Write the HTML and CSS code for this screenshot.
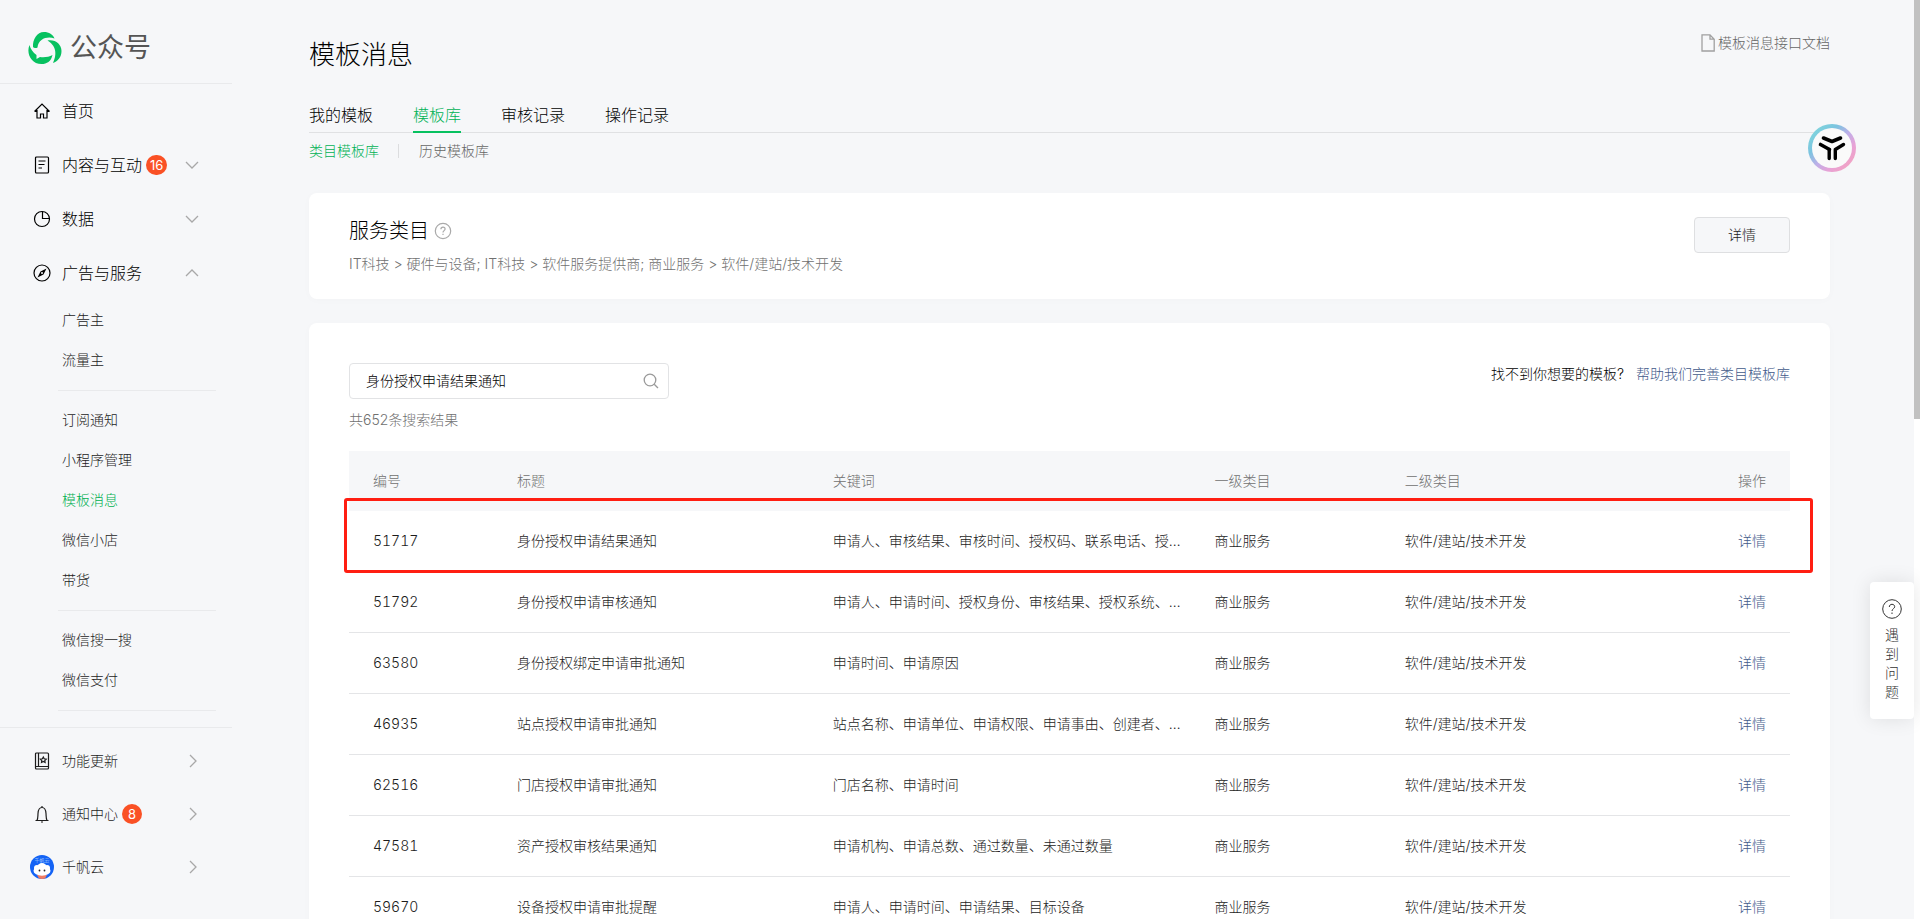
FILE: index.html
```html
<!DOCTYPE html>
<html lang="zh-CN">
<head>
<meta charset="utf-8">
<title>公众号 - 模板消息</title>
<link rel="stylesheet" href="styles.css">
</head>
<body>
<div class="page">
  <aside class="sidebar">
    <div class="brand">
      <svg class="brand-logo" viewBox="0 0 34 32" aria-hidden="true">
        <g fill="#07c160">
          <path d="M5 15C4.500 7.500 9 0 16 0c5 0 9 2.500 10.500 6.500C19.500 4 10.500 6.500 9.500 15.500 8 16.500 6 16 5 15z"/>
          <path d="M19.500 8.500C27 7 33.500 12 33.500 19c0 6-3.500 10-8.500 12 3-6.500 5-16-5.500-22.500z"/>
          <path d="M1.500 13C-2 21 3 32 13.500 32 19 32 23 29.500 24.500 23c-3.500 2-8 2.500-12.500 2L8.500 27v-4C5 20.500 2.500 17 1.500 13z"/>
        </g>
      </svg>
      <span class="brand-name">公众号</span>
    </div>
    <nav class="nav">
      <a class="nav-item" href="#">
        <svg class="icon" viewBox="0 0 18 18"><path d="M1.500 9.500L9 2l7.500 7.500M4 8v8h3.500v-4h3v4H14V8M1.500 9.500H4M14 9.500h2.500"/></svg>
        <span>首页</span>
      </a>
      <a class="nav-item" href="#">
        <svg class="icon" viewBox="0 0 18 18"><rect x="2.500" y="1" width="13" height="16" rx="1"/><path d="M5.500 5h7M5.500 8.500h6M5.500 12h3.500"/></svg>
        <span>内容与互动</span><span class="badge">16</span>
        <svg class="arrow" viewBox="0 0 14 14"><path d="M1 4l6 6 6-6"/></svg>
      </a>
      <a class="nav-item" href="#">
        <svg class="icon" viewBox="0 0 18 18"><circle cx="9" cy="9" r="7.500"/><path d="M9.500 1.500V8.500H16.500"/></svg>
        <span>数据</span>
        <svg class="arrow" viewBox="0 0 14 14"><path d="M1 4l6 6 6-6"/></svg>
      </a>
      <a class="nav-item" href="#">
        <svg class="icon" viewBox="0 0 18 18"><circle cx="9" cy="9" r="8"/><path d="M13.500 4.500L7.500 7.500 4.500 13.500 10.500 10.500z" fill="currentColor" stroke="none"/><circle cx="9" cy="9" r="1" fill="#f6f7f9" stroke="none"/></svg>
        <span>广告与服务</span>
        <svg class="arrow" viewBox="0 0 14 14"><path d="M1 10l6-6 6 6"/></svg>
      </a>
      <div class="subnav">
        <a href="#">广告主</a>
        <a href="#">流量主</a>
        <hr>
        <a href="#">订阅通知</a>
        <a href="#">小程序管理</a>
        <a class="current" href="#">模板消息</a>
        <a href="#">微信小店</a>
        <a href="#">带货</a>
        <hr>
        <a href="#">微信搜一搜</a>
        <a href="#">微信支付</a>
        <hr>
      </div>
    </nav>
    <div class="side-foot">
      <a class="nav-item small" href="#">
        <svg class="icon" viewBox="0 0 18 18"><rect x="2.500" y="1" width="13" height="16" rx="1"/><path d="M2.500 14.500h13M5.500 1v13.500M10.300 5l.9 1.800 2 .3-1.400 1.400.3 2-1.800-1-1.800 1 .3-2L7.400 7.100l2-.3z"/></svg>
        <span>功能更新</span>
        <svg class="arrow" viewBox="0 0 14 14"><path d="M5 1l6 6-6 6"/></svg>
      </a>
      <a class="nav-item small" href="#">
        <svg class="icon" viewBox="0 0 18 18"><path d="M2.500 15.500h13M4 15.500c1-2 .8-4 1-7C5.200 5 6.800 2.500 9 2.500S12.800 5 13 8.500c.2 3 0 5 1 7M8 17h2M9 1v1.500"/></svg>
        <span>通知中心</span><span class="badge">8</span>
        <svg class="arrow" viewBox="0 0 14 14"><path d="M5 1l6 6-6 6"/></svg>
      </a>
      <a class="nav-item small" href="#">
        <svg class="avatar" viewBox="0 0 24 24" aria-hidden="true">
          <circle cx="12" cy="12" r="12" fill="#1463f5"/>
          <text x="12" y="7" text-anchor="middle" class="avatar-text">千帆云</text>
          <path d="M7 20l2 3.500q3 .8 6 0L17 20z" fill="#ef7b62"/>
          <g fill="#fff"><circle cx="12" cy="12.500" r="4.500"/><circle cx="7" cy="13" r="3"/><circle cx="17" cy="13" r="3"/><ellipse cx="12" cy="15.800" rx="8.500" ry="5"/></g>
          <circle cx="9.500" cy="15.500" r=".9" fill="#222"/><circle cx="14.500" cy="15.500" r=".9" fill="#222"/>
        </svg>
        <span>千帆云</span>
        <svg class="arrow" viewBox="0 0 14 14"><path d="M5 1l6 6-6 6"/></svg>
      </a>
    </div>
  </aside>

  <main class="main">
    <header class="head">
      <h1>模板消息</h1>
      <a class="doc-link" href="#">
        <svg viewBox="0 0 14 18"><path d="M1 .8h8l4.200 4.400V17H1zM9 .8v4.400h4.200"/></svg>模板消息接口文档</a>
    </header>
    <nav class="tabs">
      <a href="#">我的模板</a>
      <a class="active" href="#">模板库</a>
      <a href="#">审核记录</a>
      <a href="#">操作记录</a>
    </nav>
    <nav class="subtabs">
      <a class="active" href="#">类目模板库</a>
      <a href="#">历史模板库</a>
    </nav>

    <section class="card category">
      <div>
        <h2>服务类目
          <svg class="help" viewBox="0 0 18 18"><circle cx="9" cy="9" r="7.700"/><path d="M6.900 7.300C6.900 6 7.800 5.200 9 5.200s2.100.8 2.100 1.900c0 1.500-2.100 1.600-2.100 3.300M9 11.700v1.300"/></svg>
        </h2>
        <p>IT科技 &gt; 硬件与设备; IT科技 &gt; 软件服务提供商; 商业服务 &gt; 软件/建站/技术开发</p>
      </div>
      <button class="btn" type="button">详情</button>
    </section>

    <section class="card library">
      <div class="toolbar">
        <form class="search">
          <input type="text" aria-label="搜索模板" value="身份授权申请结果通知">
          <button type="button" aria-label="搜索"><svg viewBox="0 0 16 16"><circle cx="7" cy="7" r="5.800"/><path d="M11.200 11.200L15 15"/></svg></button>
        </form>
        <p class="tip">找不到你想要的模板?<a href="#">帮助我们完善类目模板库</a></p>
      </div>
      <p class="count">共652条搜索结果</p>
      <div class="table-wrap">
        <table>
          <colgroup><col class="c-id"><col class="c-title"><col class="c-keys"><col class="c-first"><col class="c-second"><col></colgroup>
          <thead>
            <tr><th>编号</th><th>标题</th><th>关键词</th><th>一级类目</th><th>二级类目</th><th>操作</th></tr>
          </thead>
          <tbody>
            <tr><td>51717</td><td>身份授权申请结果通知</td><td>申请人、审核结果、审核时间、授权码、联系电话、授…</td><td>商业服务</td><td>软件/建站/技术开发</td><td><a href="#">详情</a></td></tr>
            <tr><td>51792</td><td>身份授权申请审核通知</td><td>申请人、申请时间、授权身份、审核结果、授权系统、…</td><td>商业服务</td><td>软件/建站/技术开发</td><td><a href="#">详情</a></td></tr>
            <tr><td>63580</td><td>身份授权绑定申请审批通知</td><td>申请时间、申请原因</td><td>商业服务</td><td>软件/建站/技术开发</td><td><a href="#">详情</a></td></tr>
            <tr><td>46935</td><td>站点授权申请审批通知</td><td>站点名称、申请单位、申请权限、申请事由、创建者、…</td><td>商业服务</td><td>软件/建站/技术开发</td><td><a href="#">详情</a></td></tr>
            <tr><td>62516</td><td>门店授权申请审批通知</td><td>门店名称、申请时间</td><td>商业服务</td><td>软件/建站/技术开发</td><td><a href="#">详情</a></td></tr>
            <tr><td>47581</td><td>资产授权审核结果通知</td><td>申请机构、申请总数、通过数量、未通过数量</td><td>商业服务</td><td>软件/建站/技术开发</td><td><a href="#">详情</a></td></tr>
            <tr><td>59670</td><td>设备授权申请审批提醒</td><td>申请人、申请时间、申请结果、目标设备</td><td>商业服务</td><td>软件/建站/技术开发</td><td><a href="#">详情</a></td></tr>
          </tbody>
        </table>
        <div class="marker"></div>
      </div>
    </section>
  </main>

  <div class="scroll-track"><div class="scroll-thumb"></div></div>

  <div class="float-logo">
    <svg viewBox="0 0 28 26" aria-hidden="true"><g fill="none" stroke="#000" stroke-width="4" stroke-linejoin="round" stroke-linecap="round"><path d="M5.500 3L14 6.500 22.500 3" stroke-width="3.600"/><path d="M2.500 9.500L11.500 14.500" stroke-width="3.600"/><path d="M25.500 9.500L17.300 14.500V23.500M11.200 14.500V23.500" stroke-width="3.400"/></g></svg>
  </div>

  <button class="feedback" type="button">
    <svg viewBox="0 0 20 20"><circle cx="10" cy="10" r="9.300"/><path d="M7.300 8C7.300 6.300 8.500 5.300 10 5.300s2.700 1 2.700 2.400c0 2-2.700 2.100-2.700 4.300M10 13.500v1.500"/></svg>
    <span>遇</span><span>到</span><span>问</span><span>题</span>
  </button>
</div>
</body>
</html>
```

FILE: styles.css
```css
* { box-sizing: border-box; }

body {
  margin: 0;
  background: #f6f7f9;
  color: #1c1c1c;
  font-family: Inter, "Noto Sans CJK SC", sans-serif;
  font-weight: 300;
  font-size: 14px;
  line-height: 20px;
}

h1, h2, p { margin: 0; font-weight: 300; }
a { color: inherit; text-decoration: none; }
button, input { font: inherit; color: inherit; }
svg { fill: none; stroke: currentColor; flex: none; }

.page {
  position: relative;
  display: flex;
  height: 100vh;
  overflow: hidden;
}

/* Sidebar */
.sidebar { width: 232px; flex: none; }

.brand {
  display: flex;
  align-items: center;
  gap: 8px;
  height: 84px;
  padding: 13px 0 0 28px;
  border-bottom: 1px solid #e9eaec;
}
.brand-logo { width: 34px; height: 32px; stroke: none; }
.brand-name { font-size: 27px; line-height: 36px; font-weight: 400; color: #555; }

.nav-item {
  display: flex;
  align-items: center;
  height: 54px;
  padding: 0 33px;
  font-size: 16px;
  color: #000;
}
.nav-item .icon { width: 18px; height: 18px; margin-right: 11px; stroke-width: 1.2; }
.nav-item .arrow { width: 14px; height: 14px; margin-left: auto; color: #a8a8a8; stroke-width: 1.3; }
.badge {
  min-width: 20px;
  height: 20px;
  margin-left: 4px;
  padding: 0 4px;
  border-radius: 10px;
  background: #fa5125;
  color: #fff;
  font-size: 13px;
  font-weight: 400;
  line-height: 20px;
  text-align: center;
}

.subnav { display: flex; flex-direction: column; padding-left: 58px; }
.subnav a { height: 40px; padding-left: 4px; line-height: 40px; }
.subnav .current { color: #00b050; }
.subnav hr {
  width: 158px;
  height: 1px;
  margin: 10px 0 9px;
  border: 0;
  background: #e9eaec;
}

.side-foot { margin-top: 7px; padding-top: 6px; border-top: 1px solid #e9eaec; }
.nav-item.small { height: 53px; font-size: 14px; color: #1c1c1c; }
.avatar { width: 24px; height: 24px; margin: 0 8px 0 -3px; stroke: none; }
.avatar-text { fill: #dbe7ff; font-size: 5px; }

/* Main column */
.main { flex: 1; min-width: 0; padding: 37px 90px 0 77px; }

.head { display: flex; justify-content: space-between; align-items: flex-start; margin-bottom: 30px; }
h1 { font-size: 26px; line-height: 36px; color: #000; }
.doc-link { display: flex; align-items: center; gap: 3px; margin-top: -4px; color: #666; }
.doc-link svg { width: 14px; height: 18px; stroke: #a0a0a0; stroke-width: 1.3; }

.tabs { display: flex; gap: 40px; height: 30px; border-bottom: 1px solid #e0e1e3; }
.tabs a { height: 30px; font-size: 16px; line-height: 24px; color: #000; }
.tabs .active { color: #00b255; border-bottom: 2px solid #07c160; }

.subtabs { display: flex; margin: 8px 0 32px; color: #666; }
.subtabs .active { color: #00b255; }
.subtabs a + a { position: relative; padding-left: 40px; }
.subtabs a + a::before {
  content: "";
  position: absolute;
  left: 19px;
  top: 3px;
  height: 14px;
  border-left: 1px solid #dcdddf;
}

.card { background: #fff; border-radius: 8px; box-shadow: 0 1px 10px rgba(0, 0, 0, 0.02); }

.category { display: flex; justify-content: space-between; padding: 24px 40px; height: 106px; }
h2 { display: flex; align-items: center; gap: 5px; font-size: 20px; line-height: 28px; color: #000; }
.help { width: 18px; height: 18px; stroke: #aaa; stroke-width: 1.2; }
.category p { margin-top: 9px; color: #707070; }
.btn {
  width: 96px;
  height: 36px;
  border: 1px solid #dedfe1;
  border-radius: 4px;
  background: #f6f7f9;
}

.library { margin-top: 24px; padding: 40px; }
.toolbar { display: flex; justify-content: space-between; align-items: flex-start; }
.search {
  display: flex;
  align-items: center;
  width: 320px;
  height: 36px;
  padding: 0 9px 0 16px;
  border: 1px solid #e2e3e5;
  border-radius: 4px;
}
.search input { flex: 1; min-width: 0; padding: 0; border: 0; outline: 0; background: none; color: #000; }
.search button { display: flex; padding: 0; border: 0; background: none; color: #9a9a9a; }
.search svg { width: 16px; height: 16px; stroke-width: 1.3; }
.tip { margin-top: 1px; color: #000; }
.tip a { margin-left: 12px; color: #425a8a; }
.count { margin: 11px 0 21px; color: #707070; }

.table-wrap { position: relative; }
table { width: 100%; border-collapse: separate; border-spacing: 0; table-layout: fixed; }
.c-id { width: 10%; }
.c-title { width: 21.9%; }
.c-keys { width: 26.5%; }
.c-first { width: 13.2%; }
.c-second { width: 18%; }
th, td {
  height: 61px;
  padding: 0 0 0 24px;
  text-align: left;
  font-weight: 300;
  white-space: nowrap;
  overflow: hidden;
  text-overflow: ellipsis;
}
th { height: 60px; background: #f6f7f9; color: #707070; }
td { border-bottom: 1px solid #e4e5e7; }
td:first-child { font-variant-numeric: tabular-nums; }
th:last-child, td:last-child { padding: 0 24px 0 0; text-align: right; }
td a { color: #425a8a; }

/* Highlight frame over the first row */
.marker {
  position: absolute;
  top: 47px;
  left: -5px;
  right: -23px;
  height: 75px;
  border: 3px solid #ff1e12;
  border-radius: 3px;
}

/* Floating pieces */
.scroll-track { position: absolute; top: 0; right: 0; bottom: 0; width: 6px; background: #fff; }
.scroll-thumb { height: 419px; background: #c1c1c1; }

.float-logo {
  position: absolute;
  top: 124px;
  right: 64px;
  display: flex;
  align-items: center;
  justify-content: center;
  width: 48px;
  height: 48px;
  border: 4px solid transparent;
  border-radius: 50%;
  background: linear-gradient(#fafafa, #fafafa) padding-box,
    linear-gradient(135deg, #7fd6dc 10%, #7cc4e0 32%, #c0aee8 52%, #e8a2d6 70%, #f3a3c0 90%) border-box;
}
.float-logo svg { width: 28px; height: 26px; }

.feedback {
  position: absolute;
  top: 582px;
  right: 6px;
  display: flex;
  flex-direction: column;
  align-items: center;
  width: 44px;
  padding: 17px 0 18px;
  border: 0;
  border-radius: 4px;
  background: #fff;
  box-shadow: 0 0 20px rgba(0, 0, 0, 0.1);
  color: #333;
  line-height: 19px;
}
.feedback svg { width: 20px; height: 20px; margin-bottom: 6px; }
```
